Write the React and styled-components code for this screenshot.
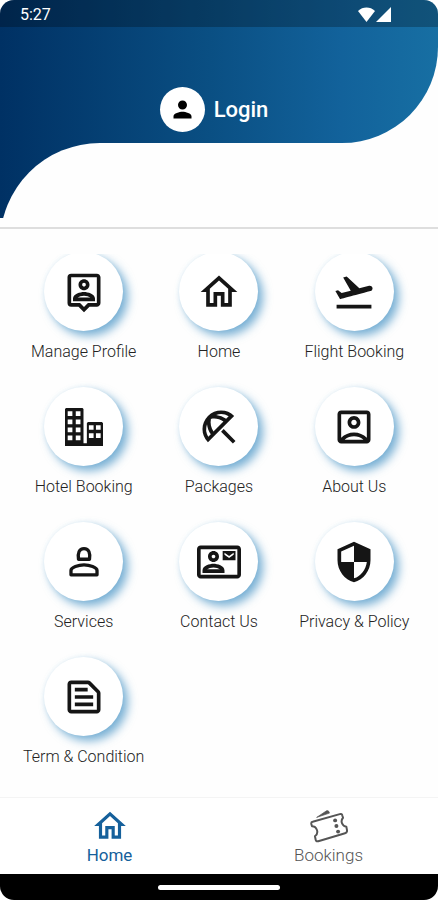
import React from 'react';
import styled, { createGlobalStyle } from 'styled-components';
import {
    MdOutlinePersonPin,
    MdOutlineHome,
    MdFlightTakeoff,
    MdOutlineBeachAccess,
    MdOutlineAccountBox,
    MdOutlineContactMail,
    MdOutlineSecurity,
    MdOutlineTextSnippet,
    MdPerson
} from 'react-icons/md';

const brandGradient = 'linear-gradient(90deg, #003164 0%, #0a4f83 48%, #12629b 78%, #176fa3 100%)';

const GlobalStyle = createGlobalStyle`
    * {
        box-sizing: border-box;
    }
    body {
        margin: 0;
        background: #fff;
        font-family: Roboto, 'Liberation Sans', sans-serif;
    }
`

const Screen = styled.div`
    display: flex;
    flex-direction: column;
    min-height: 100vh;
    border-radius: 14px;
    overflow: hidden;
    background: #fefefe;
`

const Header = styled.header`
    margin-bottom: 25px;
    padding-bottom: 9px;
    border-bottom: 2px solid #dedede;
`

const Banner = styled.div`
    background: ${brandGradient};
    border-bottom-right-radius: 96px;
`

const StatusBar = styled.div`
    display: flex;
    justify-content: space-between;
    align-items: center;
    height: 27px;
    padding: 2px 47px 0 20px;
    background: rgba(0, 0, 0, .25);
    color: #fff;
    font-size: 16px;
`

const StatusIcons = styled.div`
    display: flex;
    gap: 1px;
`

const LoginRow = styled.div`
    display: flex;
    justify-content: center;
    padding: 60px 10px 11px 0;
`

const LoginButton = styled.button`
    display: flex;
    align-items: center;
    gap: 9px;
    padding: 0;
    border: 0;
    background: none;
    color: #fff;
    font: 500 22px Roboto, sans-serif;
    cursor: pointer;
`

const Avatar = styled.span`
    display: grid;
    place-items: center;
    width: 45px;
    height: 45px;
    border-radius: 50%;
    background: #fff;
    color: #000;
`

// the white sheet is taller than its frame, so the curve is cut off at the bottom
const Curve = styled.div`
    height: 75px;
    overflow: hidden;
    background: ${brandGradient};
`

const Sheet = styled.div`
    height: 120px;
    border-top-left-radius: 100px;
    background: #fefefe;
`

const Menu = styled.main`
    flex: 1;
    overflow: hidden;
`

// scrolled a touch, the first row of discs loses its top edge
const Grid = styled.div`
    display: grid;
    grid-template-columns: repeat(3, 1fr);
    row-gap: 25px;
    margin-top: -2px;
    padding: 0 16px 30px;
`

const Tile = styled.a`
    display: flex;
    flex-direction: column;
    align-items: center;
    gap: 11px;
    color: #222;
    font-size: 16px;
    font-weight: 300;
    line-height: 20px;
    white-space: nowrap;
    text-decoration: none;
`

const Disc = styled.span`
    display: grid;
    place-items: center;
    width: 79px;
    height: 79px;
    border-radius: 50%;
    background: #fff;
    color: #151515;
    box-shadow: 5px 5px 10px rgba(50, 135, 190, .65), 0 0 4px rgba(120, 180, 215, .15);
`

const BottomNav = styled.nav`
    display: grid;
    grid-template-columns: repeat(2, 1fr);
    padding: 9px 0;
    border-top: 1px solid #f4f4f4;
    background: #fff;
`

const NavItem = styled.a`
    display: flex;
    flex-direction: column;
    align-items: center;
    color: ${({ $active }) => ($active ? '#15609b' : '#555')};
    font-size: 17px;
    font-weight: ${({ $active }) => ($active ? 400 : 300)};
    line-height: 20px;
    text-decoration: none;
`

const SystemBar = styled.div`
    display: grid;
    place-items: center;
    height: 26px;
    background: #000;
`

const HomeHandle = styled.span`
    width: 28%;
    height: 5px;
    border-radius: 3px;
    background: #fff;
`

const WifiIcon = () => (
    <svg width='17' height='15' viewBox='0 0 17 15' fill='#fff' aria-hidden='true'>
        <path d='M0 4C2.5 1.5 5.3.5 8.500.5S14.500 1.500 17 4L8.500 15z' />
    </svg>
)

const SignalIcon = () => (
    <svg width='15' height='15' viewBox='0 0 15 15' fill='#fff' aria-hidden='true'>
        <path d='M15 0v15H0z' />
    </svg>
)

const HotelIcon = () => (
    <svg width='38' height='38' viewBox='0 0 113 113' fill='currentColor' aria-hidden='true'>
        <path
            fillRule='evenodd'
            d='M3 0h49l3 3v102h10V45l3-3h42l3 3v68H0V3z
               M8 10h14v14H8z M32 10h14v14H32z
               M8 34h14v14H8z M32 34h14v14H32z
               M8 58h14v14H8z M32 58h14v14H32z
               M8 82h14v14H8z M32 82h14v14H32z
               M71 51h14v14H71z M92 51h14v14H92z
               M71 75h14v14H71z M92 75h14v14H92z'
        />
    </svg>
)

const AgentIcon = () => (
    <svg width='44' height='44' viewBox='0 0 24 24' fill='none' stroke='currentColor' strokeWidth='1.8' strokeLinejoin='round' aria-hidden='true'>
        <path d='M9 10.500C8.500 7.100 9.300 4.700 12 4.700s3.500 2.400 3 5.800z' />
        <path d='M4.900 19v-2.400c0-1.600 4-3 7.100-3s7.100 1.400 7.100 3V19z' />
    </svg>
)

const TicketIcon = () => (
    <svg width='38' height='34' viewBox='0 0 115 102' fill='none' stroke='currentColor' strokeWidth='6' strokeLinejoin='round' aria-hidden='true'>
        <path d='M8 38L90 15Q97 13 98 20L100 26Q93 34 97 43T110 53L112 64Q113 71 106 73L25 97Q18 99 17 92L15 82Q25 74 21 63T6 52L4 45Q3 39 8 38z' />
        <path d='M20 25L50 5Q57 2 59 12z' fill='currentColor' strokeWidth='2' />
        <g fill='currentColor' stroke='none'>
            <circle cx='76' cy='34' r='6' />
            <circle cx='80' cy='51' r='6' />
            <circle cx='85' cy='68' r='6' />
        </g>
    </svg>
)

const NavIconBox = styled.span`
    display: grid;
    place-items: center;
    height: 38px;
`

const menuItems = [
    { label: 'Manage Profile', icon: <MdOutlinePersonPin size={44} /> },
    { label: 'Home', icon: <MdOutlineHome size={44} /> },
    { label: 'Flight Booking', icon: <MdFlightTakeoff size={44} /> },
    { label: 'Hotel Booking', icon: <HotelIcon /> },
    { label: 'Packages', icon: <MdOutlineBeachAccess size={44} /> },
    { label: 'About Us', icon: <MdOutlineAccountBox size={44} /> },
    { label: 'Services', icon: <AgentIcon /> },
    { label: 'Contact Us', icon: <MdOutlineContactMail size={44} /> },
    { label: 'Privacy & Policy', icon: <MdOutlineSecurity size={44} /> },
    { label: 'Term & Condition', icon: <MdOutlineTextSnippet size={44} /> }
]

const App = () => {
    return (
        <Screen>
            <GlobalStyle />
            <Header>
                <Banner>
                    <StatusBar>
                        <span>5:27</span>
                        <StatusIcons>
                            <WifiIcon />
                            <SignalIcon />
                        </StatusIcons>
                    </StatusBar>
                    <LoginRow>
                        <LoginButton type='button'>
                            <Avatar><MdPerson size={27} /></Avatar>
                            Login
                        </LoginButton>
                    </LoginRow>
                </Banner>
                <Curve>
                    <Sheet />
                </Curve>
            </Header>
            <Menu>
                <Grid>
                    {menuItems.map(({ label, icon }) => (
                        <Tile href='#' key={label}>
                            <Disc>{icon}</Disc>
                            {label}
                        </Tile>
                    ))}
                </Grid>
            </Menu>
            <BottomNav>
                <NavItem href='#' $active>
                    <NavIconBox><MdOutlineHome size={38} /></NavIconBox>
                    Home
                </NavItem>
                <NavItem href='#'>
                    <NavIconBox><TicketIcon /></NavIconBox>
                    Bookings
                </NavItem>
            </BottomNav>
            <SystemBar>
                <HomeHandle />
            </SystemBar>
        </Screen>
    )
}

export default App
